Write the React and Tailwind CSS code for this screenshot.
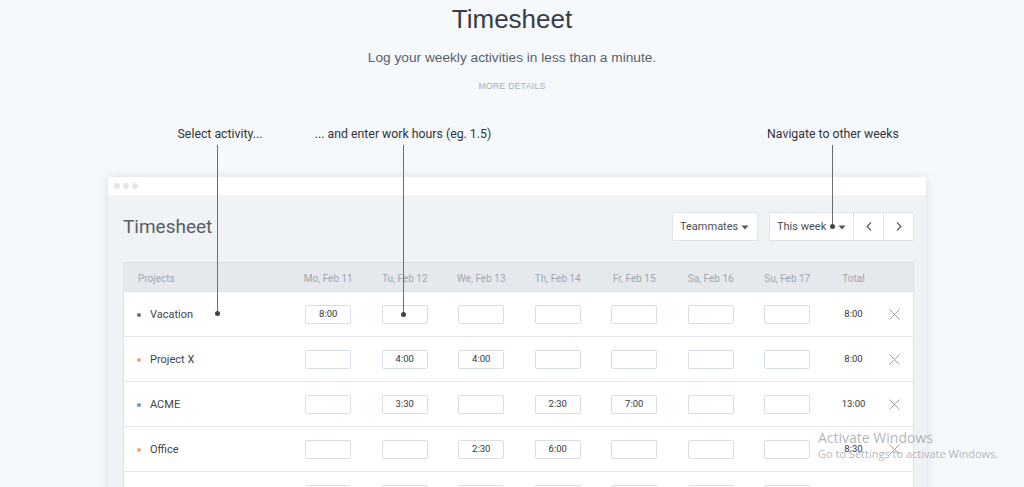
import React from "react";

const days = ["Mo, Feb 11", "Tu, Feb 12", "We, Feb 13", "Th, Feb 14", "Fr, Feb 15", "Sa, Feb 16", "Su, Feb 17"];

const rows = [
  { name: "Vacation", dot: "bg-[#6b6f75]", vals: ["8:00", "", "", "", "", "", ""], total: "8:00" },
  { name: "Project X", dot: "bg-[#f2a777]", vals: ["", "4:00", "4:00", "", "", "", ""], total: "8:00" },
  { name: "ACME", dot: "bg-[#6a98c8]", vals: ["", "3:30", "", "2:30", "7:00", "", ""], total: "13:00" },
  { name: "Office", dot: "bg-[#f2a777]", vals: ["", "", "2:30", "6:00", "", "", ""], total: "8:30" },
  { name: "", dot: "", vals: ["", "", "", "", "", "", ""], total: "" },
];

const gridCols = "grid grid-cols-[166px_repeat(7,76.5px)_56px_1fr]";

function Caret() {
  return (
    <svg width="8" height="5" viewBox="0 0 8 5" className="ml-auto">
      <path d="M0.5 0.5 L7.5 0.5 L4 4.5 Z" fill="#555" />
    </svg>
  );
}

function XIcon() {
  return (
    <svg width="11" height="11" viewBox="0 0 11 11">
      <path d="M0.5 0.5 L10.5 10.5 M10.5 0.5 L0.5 10.5" stroke="#9ea3a8" strokeWidth="1" fill="none" />
    </svg>
  );
}

function Pin({ x, top, bottom }) {
  return (
    <>
      <div className="absolute w-px bg-[#6a6e73]" style={{ left: x, top, height: bottom - top }} />
      <div className="absolute w-[5px] h-[5px] rounded-full bg-[#3f4348]" style={{ left: x - 2, top: bottom - 2 }} />
    </>
  );
}

export default function App() {
  return (
    <div className="relative w-[1024px] h-[487px] overflow-hidden bg-[#f6f9fc] font-['Roboto',sans-serif]">
      <div className="flex flex-col items-center">
        <h1 className="mt-[3px] h-[32px] leading-[32px] text-[26px] text-[#363d47] font-['Liberation_Sans',sans-serif]">Timesheet</h1>
        <p className="mt-[13px] h-[20px] leading-[20px] text-[13.7px] text-[#56606c] font-['Liberation_Sans',sans-serif]">Log your weekly activities in less than a minute.</p>
        <p className="mt-[12px] h-[12px] leading-[12px] text-[8.8px] text-[#a9aeb3] font-['Liberation_Sans',sans-serif] tracking-[0.2px]">MORE DETAILS</p>
      </div>

      <div className="relative h-[16px] mt-[34px] text-[12.3px] leading-[16px] text-[#2f3338]">
        <span className="absolute left-[220px] -translate-x-1/2 whitespace-nowrap">Select activity...</span>
        <span className="absolute left-[403px] -translate-x-1/2 whitespace-nowrap">... and enter work hours (eg. 1.5)</span>
        <span className="absolute left-[833px] -translate-x-1/2 whitespace-nowrap">Navigate to other weeks</span>
      </div>

      <div className="mt-[35px] ml-[108px] w-[818px] h-[400px] bg-[#eff3f6] shadow-[0_0_10px_rgba(140,160,180,0.3)]">
        <div className="h-[18px] bg-white flex items-center gap-[3px] px-[6px]">
          <span className="w-[6px] h-[6px] rounded-full bg-[#e2e6ea]" />
          <span className="w-[6px] h-[6px] rounded-full bg-[#e2e6ea]" />
          <span className="w-[6px] h-[6px] rounded-full bg-[#e2e6ea]" />
        </div>
        <div className="pl-[15px] pr-[12px] pt-[17px]">
          <div className="flex items-center h-[29px]">
            <h2 className="text-[19px] text-[#595e65] leading-[29px]">Timesheet</h2>
            <div className="ml-auto flex items-stretch h-[29px] text-[11px] text-[#4a4f55]">
              <div className="w-[86px] bg-white border border-[#dfe4e8] rounded-[2px] flex items-center pl-[7px] pr-[8px] pt-px">
                <span>Teammates</span>
                <Caret />
              </div>
              <div className="ml-[11px] flex bg-white border border-[#dfe4e8] rounded-[2px]">
                <div className="w-[84px] flex items-center pl-[7px] pr-[7px] pt-px border-r border-[#dfe4e8]">
                  <span>This week</span>
                  <Caret />
                </div>
                <div className="w-[30px] flex items-center justify-center border-r border-[#dfe4e8]">
                  <svg width="6" height="9" viewBox="0 0 6 9"><path d="M5 0.5 L1 4.5 L5 8.5" stroke="#555" fill="none" strokeWidth="1.1" /></svg>
                </div>
                <div className="w-[29px] flex items-center justify-center">
                  <svg width="6" height="9" viewBox="0 0 6 9"><path d="M1 0.5 L5 4.5 L1 8.5" stroke="#555" fill="none" strokeWidth="1.1" /></svg>
                </div>
              </div>
            </div>
          </div>

          <div className="mt-[21px] border border-[#dce2e7] bg-white">
            <div className={`${gridCols} h-[29px] bg-[#e5e9ed] items-center text-[10px] text-[#a0a6ad] border-b border-[#dce2e7] pt-[2px]`}>
              <span className="pl-[14px]">Projects</span>
              {days.map((d) => (
                <span key={d} className="text-center">{d}</span>
              ))}
              <span className="text-center">Total</span>
              <span />
            </div>
            {rows.map((r, i) => (
              <div key={i} className={`${gridCols} h-[45px] items-center border-b border-[#e1e6eb]`}>
                <div className="flex items-center pl-[13px] pt-[2px]">
                  {r.dot && <span className={`w-[4px] h-[4px] rounded-full ${r.dot}`} />}
                  <span className="ml-[9px] text-[11px] text-[#41464c]">{r.name}</span>
                </div>
                {r.vals.map((v, j) => (
                  <div key={j} className="flex justify-center">
                    <div className="w-[46px] h-[19px] border border-[#d7dee5] rounded-[2px] bg-white flex items-center justify-center text-[9.5px] text-[#33373c] pt-px">
                      {v}
                    </div>
                  </div>
                ))}
                <span className="text-center text-[9.5px] text-[#33373c] pt-px">{r.total}</span>
                <div className="flex justify-center pr-[5px]">{r.name && <XIcon />}</div>
              </div>
            ))}
          </div>
        </div>
      </div>

      <Pin x={217} top={145} bottom={313} />
      <Pin x={403} top={145} bottom={314} />
      <Pin x={832} top={145} bottom={226} />

      <div className="absolute left-[818px] top-[429px] font-['Open_Sans',sans-serif] text-[#8e949a]/70 pointer-events-none">
        <div className="text-[14px] leading-[18px]">Activate Windows</div>
        <div className="text-[11px] leading-[14px]">Go to Settings to activate Windows.</div>
      </div>
    </div>
  );
}
